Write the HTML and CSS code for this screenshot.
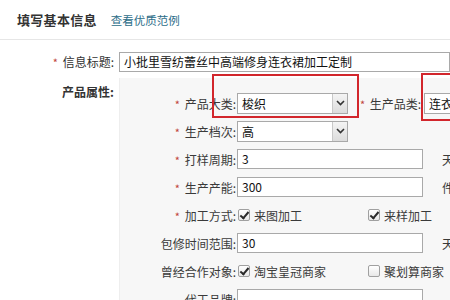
FILE: index.html
```html
<!DOCTYPE html>
<html lang="zh">
<head>
<meta charset="utf-8">
<link rel="stylesheet" href="styles.css">
</head>
<body>
<div class="header">
  <span class="h-title">填写基本信息</span>
  <a class="h-link">查看优质范例</a>
</div>
<div class="form">
  <div class="row title-row">
    <div class="main-label"><span class="req">*</span> 信息标题:</div>
    <div class="input title-input">小批里雪纺蕾丝中高端修身连衣裙加工定制</div>
  </div>
  <div class="row attr-row">
    <div class="main-label bold">产品属性:</div>
    <div class="panel">
      <div class="mark mark1"></div>
      <div class="mark mark2"></div>
      <div class="prow">
        <div class="plabel"><span class="req">*</span> 产品大类:</div>
        <div class="select"><span>梭织</span><i class="arrow"><svg width="9" height="6" viewBox="0 0 9 6"><path d="M1 1 L4.5 4.5 L8 1" fill="none" stroke="#333" stroke-width="1.6"/></svg></i></div>
        <div class="plabel2"><span class="req">*</span> 生产品类:</div>
        <div class="select select2"><span>连衣裙</span></div>
      </div>
      <div class="prow">
        <div class="plabel"><span class="req">*</span> 生产档次:</div>
        <div class="select"><span>高</span><i class="arrow"><svg width="9" height="6" viewBox="0 0 9 6"><path d="M1 1 L4.5 4.5 L8 1" fill="none" stroke="#333" stroke-width="1.6"/></svg></i></div>
      </div>
      <div class="prow">
        <div class="plabel"><span class="req">*</span> 打样周期:</div>
        <div class="input field">3</div>
        <span class="unit">天</span>
      </div>
      <div class="prow">
        <div class="plabel"><span class="req">*</span> 生产产能:</div>
        <div class="input field">300</div>
        <span class="unit">件</span>
      </div>
      <div class="prow">
        <div class="plabel"><span class="req">*</span> 加工方式:</div>
        <div class="checks">
          <label class="chk c1"><i class="box on"></i>来图加工</label>
          <label class="chk"><i class="box on"></i>来样加工</label>
        </div>
      </div>
      <div class="prow">
        <div class="plabel">包修时间范围:</div>
        <div class="input field">30</div>
        <span class="unit">天</span>
      </div>
      <div class="prow">
        <div class="plabel">曾经合作对象:</div>
        <div class="checks">
          <label class="chk c1"><i class="box on"></i>淘宝皇冠商家</label>
          <label class="chk"><i class="box"></i>聚划算商家</label>
        </div>
      </div>
      <div class="prow">
        <div class="plabel">代工品牌:</div>
        <div class="input field"></div>
      </div>
    </div>
  </div>
</div>
</body>
</html>
```

FILE: styles.css
```css
* { box-sizing: border-box; }
html, body { margin: 0; padding: 0; background: #fff; overflow: hidden; }
body {
  width: 450px; height: 300px;
  font-family: "Noto Sans CJK SC", "Microsoft YaHei", sans-serif;
  font-size: 12px; color: #333;
}
.header {
  height: 40px;
  padding-left: 17px;
  display: flex; align-items: center;
  border-bottom: 1px solid #e6e6e6;
}
.h-title { font-size: 13px; font-weight: bold; color: #333; letter-spacing: 0.3px; }
.h-link { margin-left: 14px; font-size: 11.5px; color: #2c6d88; }
.form { padding-top: 12px; }
.row { display: flex; }
.main-label {
  width: 119px; padding-right: 5px; text-align: right;
  height: 20px; line-height: 20px; flex: none; color: #333;
}
.bold { font-weight: bold; }
.attr-row .main-label { margin-top: 4px; }
.req { color: #c0443c; font-size: 11px; margin-right: 2px; }
.input {
  height: 20px; line-height: 18px; padding: 0 4px;
  border: 1px solid #a9a9a9; background: #fff; color: #111;
  white-space: nowrap; overflow: hidden;
}
.title-input { flex: 1; font-size: 12px; }
.attr-row { margin-top: 6px; }
.panel {
  position: relative; flex: 1; height: 230px;
  background: #f7f7f7; border-left: 1px solid #eee;
  padding-top: 11px;
}
.prow { display: flex; align-items: center; height: 28px; }
.plabel { width: 117px; text-align: right; padding-right: 1px; flex: none; white-space: nowrap; color: #3a3a3a; }
.select {
  position: relative; width: 111px; height: 21px; line-height: 19px;
  border: 1px solid #a9a9a9; background: #fff; padding-left: 4px; color: #111;
  flex: none;
}
.arrow {
  position: absolute; right: 0; top: 0; width: 15px; height: 19px;
  background: linear-gradient(#f4f4f4, #dcdcdc);
  border-left: 1px solid #c8c8c8;
  display: flex; align-items: center; justify-content: center;
}
.plabel2 { margin-left: 12px; width: 64px; white-space: nowrap; color: #3a3a3a; }
.select2 { width: 60px; border-right: none; }
.field { width: 186px; flex: none; }
.unit { margin-left: 19px; color: #3a3a3a; }
.checks { display: flex; align-items: center; }
.chk { display: flex; align-items: center; color: #3a3a3a; }
.chk.c1 { width: 130px; }
.box {
  width: 12px; height: 12px; border: 1px solid #a0a0a0; background: linear-gradient(#fff, #e8e8e8);
  margin: 0 4px 0 1px; position: relative; border-radius: 2px;
}
.box.on::after {
  content: ""; position: absolute; left: 3px; top: 0px; width: 3px; height: 7px;
  border: solid #2a2a2a; border-width: 0 2px 2px 0; transform: rotate(40deg);
}
.mark { position: absolute; border: 2px solid #d2262c; }
.mark1 { left: 92px; top: -4px; width: 147px; height: 44px; }
.mark2 { left: 301px; top: -5px; width: 60px; height: 48px; border-right: none; }
```
